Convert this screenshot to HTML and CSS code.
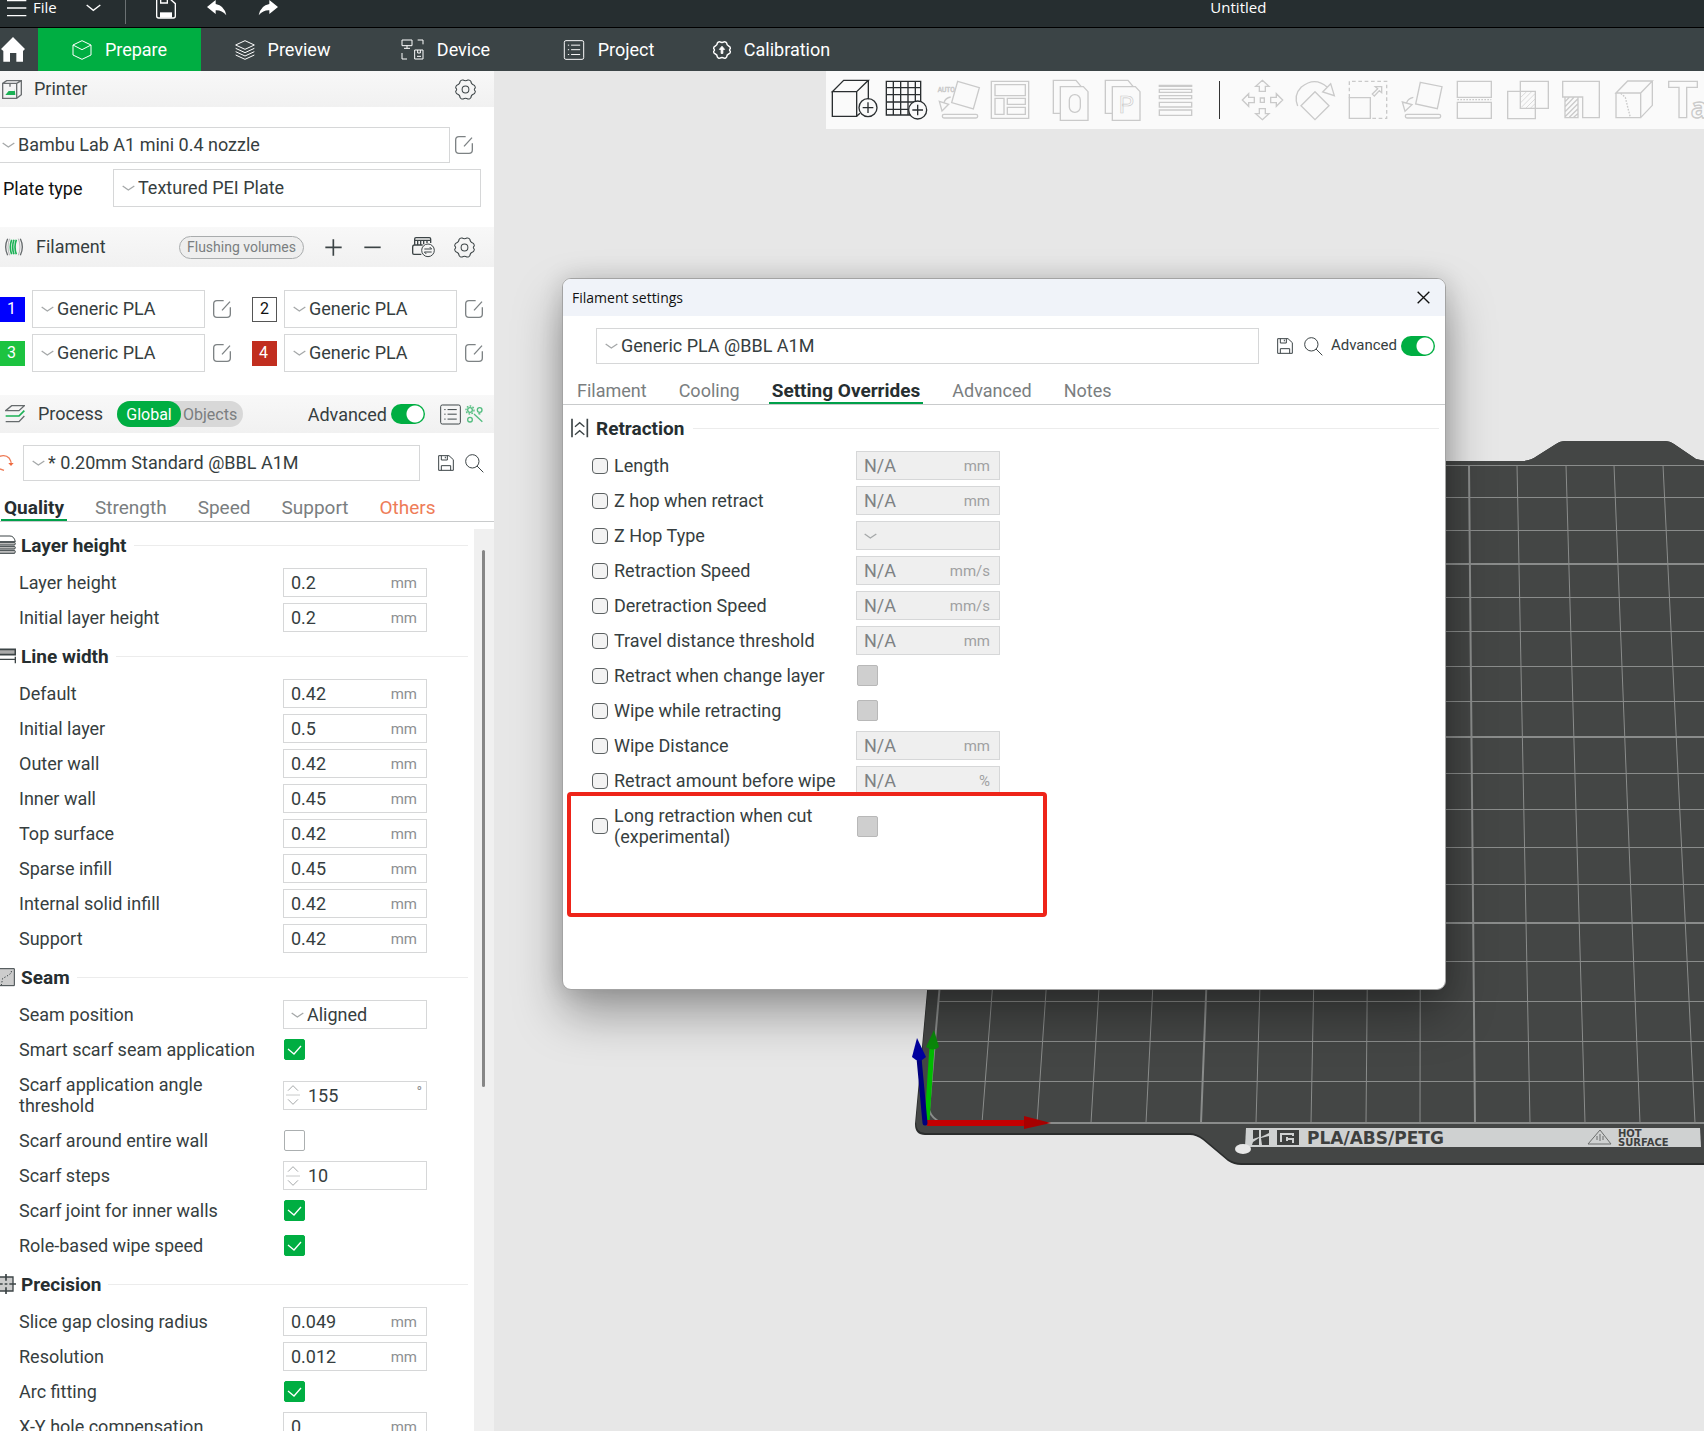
FILE: index.html
```html
<!DOCTYPE html>
<html lang="en">
<head>
<meta charset="utf-8">
<title>Untitled</title>
<link rel="stylesheet" href="styles.css">
</head>
<body>
<svg class="defs" aria-hidden="true">
  <symbol id="chev" viewBox="0 0 39 18"><path d="M2 3 19 15 37 3"/></symbol>
  <symbol id="gear" viewBox="-1 -1 62 62"><path d="M17 3Q20 1 23 2 30 6 37 2 40 1 43 3L46 6Q46 14 54 17 57 17 58 21L59 25Q53 30 59 35L58 39Q57 43 54 43 46 46 46 54L43 57Q40 59 37 58 30 54 23 58 20 59 17 57L14 54Q14 46 6 43 3 43 2 39L1 35Q7 30 1 25L2 21Q3 17 6 17 14 14 14 6Z"/><circle cx="30" cy="30" r="10"/></symbol>
  <symbol id="edit" viewBox="0 0 54 54"><path d="M32 2H12Q2 2 2 12V42Q2 52 12 52H42Q52 52 52 42V22M27 31 51 5"/></symbol>
  <symbol id="save" viewBox="0 0 48 48"><path d="M2 2H33L46 14V46H2ZM10 2V15H28V2M22 5V10M10 46V32H38V46"/></symbol>
  <symbol id="search" viewBox="0 0 57 57"><circle cx="22" cy="22" r="20"/><path d="M36 36 55 55"/></symbol>
  <symbol id="list" viewBox="0 0 64 62"><rect x="2" y="2" width="60" height="58" rx="5"/><path d="M13 16H17M13 30H17M13 45H17M23 16H51M23 30H51M23 45H51"/></symbol>
  <symbol id="spin" viewBox="0 0 42 66"><path d="M6 20 21 5 36 20M6 46 21 61 36 46"/><path d="M0 33H42" opacity=".6"/></symbol>
</svg>

<div class="app">
  <header class="titlebar">
    <button class="file" type="button"><svg class="ico" width="20" height="18" viewBox="0 0 60 54"><path d="M0 5H58M0 27H58M0 50H58" stroke="#fff" stroke-width="4"/></svg>File</button>
    <svg class="ico drop" width="15" height="8" viewBox="0 0 45 24"><path d="M2 3 22 19 43 3" stroke="#fff" stroke-width="4"/></svg>
    <i class="bar"></i>
    <button type="button" aria-label="Save"><svg class="ico" width="20" height="22" viewBox="0 0 60 66"><path d="M2 0V57Q2 63 8 63H52Q58 63 58 57V20L40 4H2" stroke="#fff" stroke-width="4"/><path d="M14 2V18H34V2" stroke="#fff" stroke-width="4"/><path d="M12 46H48V62H12Z" fill="#fff"/></svg></button>
    <button type="button" aria-label="Undo"><svg class="ico" width="20" height="18" viewBox="0 0 60 54"><path d="M0 24 26 3V15Q52 19 58 49 44 33 26 34V45Z" fill="#fff"/></svg></button>
    <button type="button" aria-label="Redo"><svg class="ico" width="20" height="18" viewBox="0 0 60 54"><path d="M60 24 34 3V15Q8 19 2 49 16 33 34 34V45Z" fill="#fff"/></svg></button>
    <span class="doc">Untitled</span>
  </header>

  <nav class="nav">
    <button class="home" type="button" aria-label="Home"><svg class="ico" width="24" height="25" viewBox="0 0 72 75"><path d="M36 0 72 36 66 42V74H46V48H27V74H7V42L0 36Z" fill="#fff"/></svg></button>
    <button class="navtab on" type="button"><svg class="ico w" width="20" height="20" viewBox="0 0 60 60"><path d="M30 2 57 15V45L30 58 3 45V15ZM3 15 30 29 57 15"/></svg>Prepare</button>
    <button class="navtab" type="button"><svg class="ico w" width="20" height="20" viewBox="0 0 60 60"><path d="M30 2 58 15 30 28 2 15ZM2 25 30 38 58 25M2 35 30 48 58 35M2 45 30 58 58 45"/></svg>Preview</button>
    <button class="navtab" type="button"><svg class="ico w" width="23" height="21" viewBox="0 0 69 63"><path d="M3 3H33V20H3ZM18 20V28M9 28H27M50 3H66V16M3 42V60H18M41 33H66V60H41ZM50 33V42H58V33M48 52H60"/></svg>Device</button>
    <button class="navtab" type="button"><svg class="ico w" width="22" height="20"><use href="#list"/></svg>Project</button>
    <button class="navtab" type="button"><svg class="ico w" width="18" height="18" viewBox="-1 -1 62 62"><path d="M17 3Q20 1 23 2 30 6 37 2 40 1 43 3L46 6Q46 14 54 17 57 17 58 21L59 25Q53 30 59 35L58 39Q57 43 54 43 46 46 46 54L43 57Q40 59 37 58 30 54 23 58 20 59 17 57L14 54Q14 46 6 43 3 43 2 39L1 35Q7 30 1 25L2 21Q3 17 6 17 14 14 14 6Z" stroke-width="5"/><path d="M30 17 39 28H33V42H27V28H21Z" fill="#fff"/></svg>Calibration</button>
  </nav>

  <div class="main">
    <aside class="side">
      <section class="head printer-head">
        <svg class="ico" width="20" height="19" viewBox="0 0 60 57"><path d="M2 10 14 2H58V44L44 55H2ZM2 10H44V55M44 10 58 2M24 10V20" stroke="#6a6e70" stroke-width="4"/><path d="M10 45 20 33H38V26L40 45Z" fill="#1bb155"/></svg>
        <h2>Printer</h2>
        <button class="push" type="button" aria-label="Printer options"><svg class="ico d" width="21" height="21"><use href="#gear"/></svg></button>
      </section>
      <div class="printer">
        <div class="line preset"><span class="pick wide"><svg class="chev"><use href="#chev"/></svg><select aria-label="Printer preset"><option>Bambu Lab A1 mini 0.4 nozzle</option></select></span><button type="button" aria-label="Edit printer"><svg class="ico g" width="18" height="18"><use href="#edit"/></svg></button></div>
        <div class="line plate"><label for="plate">Plate type</label><span class="pick tall"><svg class="chev"><use href="#chev"/></svg><select id="plate"><option>Textured PEI Plate</option></select></span></div>
      </div>

      <section class="head filament-head">
        <svg class="ico" width="18" height="18" viewBox="0 0 54 54"><path d="M8 2Q-4 27 8 52M46 2Q58 27 46 52" stroke="#666b6d" stroke-width="4"/><path d="M14 2Q4 27 14 52M40 2Q50 27 40 52" stroke="#999" stroke-width="2"/><path d="M20 5Q12 27 20 49M27 5Q19 27 27 49M34 5Q26 27 34 49" stroke="#1bb155" stroke-width="5"/></svg>
        <h2>Filament</h2>
        <button class="flush" type="button">Flushing volumes</button>
        <button type="button" class="plus" aria-label="Add filament"><svg class="ico d" width="17" height="17" viewBox="0 0 51 51"><path d="M25 1V50M1 25H50" stroke-width="5"/></svg></button>
        <button type="button" class="minus" aria-label="Remove filament"><svg class="ico d" width="17" height="17" viewBox="0 0 51 51"><path d="M1 25H50" stroke-width="5"/></svg></button>
        <button type="button" class="ams" aria-label="Sync filaments"><svg class="ico d" width="23" height="21" viewBox="0 0 69 63"><path d="M8 22V6Q8 2 12 2H52Q56 2 56 6V18M8 10H56M17 10V24M26 10V24M35 10V22M45 10V18M28 52H6Q2 52 2 48V30Q2 24 8 24H32" stroke-width="4"/><circle cx="48" cy="40" r="19" fill="#f4f4f4"/><path d="M37 36H59L53 30M59 45H37L43 51"/></svg></button>
        <button type="button" class="fgear" aria-label="Filament options"><svg class="ico d" width="21" height="21"><use href="#gear"/></svg></button>
      </section>
      <div class="slots">
        <div class="slot"><span class="sw blue">1</span><span class="pick tall"><svg class="chev"><use href="#chev"/></svg><select aria-label="Filament 1"><option>Generic PLA</option></select></span><button type="button" aria-label="Edit filament 1"><svg class="ico g" width="18" height="18"><use href="#edit"/></svg></button></div>
        <div class="slot"><span class="sw white">2</span><span class="pick tall"><svg class="chev"><use href="#chev"/></svg><select aria-label="Filament 2"><option>Generic PLA</option></select></span><button type="button" aria-label="Edit filament 2"><svg class="ico g" width="18" height="18"><use href="#edit"/></svg></button></div>
        <div class="slot"><span class="sw green">3</span><span class="pick tall"><svg class="chev"><use href="#chev"/></svg><select aria-label="Filament 3"><option>Generic PLA</option></select></span><button type="button" aria-label="Edit filament 3"><svg class="ico g" width="18" height="18"><use href="#edit"/></svg></button></div>
        <div class="slot"><span class="sw red">4</span><span class="pick tall"><svg class="chev"><use href="#chev"/></svg><select aria-label="Filament 4"><option>Generic PLA</option></select></span><button type="button" aria-label="Edit filament 4"><svg class="ico g" width="18" height="18"><use href="#edit"/></svg></button></div>
      </div>

      <section class="head process-head">
        <svg class="ico" width="20" height="18" viewBox="0 0 60 54"><path d="M20 2H58L42 17H2Z" stroke="#666b6d" stroke-width="4"/><path d="M2 33H42L58 17" stroke="#1bb155" stroke-width="5"/><path d="M2 50H42L58 33" stroke="#666b6d" stroke-width="4"/></svg>
        <h2>Process</h2>
        <span class="seg"><button class="on" type="button">Global</button><button type="button">Objects</button></span>
        <label class="adv" for="adv1">Advanced</label><input class="toggle" id="adv1" type="checkbox" checked>
        <button class="plist" type="button" aria-label="Compare"><svg class="ico d" width="21" height="21"><use href="#list"/></svg></button>
        <button class="pgear" type="button" aria-label="Parameter table"><svg class="ico" width="18" height="18" viewBox="0 0 54 54" stroke="#52bd7f" stroke-width="4"><circle cx="15" cy="15" r="7"/><circle cx="15" cy="15" r="12" stroke-dasharray="5 4"/><circle cx="44" cy="15" r="7"/><circle cx="15" cy="44" r="7"/><path d="M27 27 52 50M40 26 46 27"/></svg></button>
      </section>
      <div class="line process">
        <button type="button" aria-label="Reset"><svg class="ico" width="14" height="16" viewBox="0 0 42 48"><path d="M0 4Q16-2 28 10 34 18 34 30M0 42 12 46" stroke="#ee7c58" stroke-width="4"/><path d="M25 24H41L33 33Z" fill="#ee6a40"/></svg></button>
        <span class="pick"><svg class="chev"><use href="#chev"/></svg><select aria-label="Process preset"><option>* 0.20mm Standard @BBL A1M</option></select></span>
        <button class="psave" type="button" aria-label="Save preset"><svg class="ico d" width="16" height="16"><use href="#save"/></svg></button>
        <button type="button" aria-label="Search"><svg class="ico d" width="19" height="19"><use href="#search"/></svg></button>
      </div>
      <div class="tabs" role="tablist">
        <button class="on" role="tab" type="button">Quality</button><button role="tab" type="button">Strength</button><button role="tab" type="button">Speed</button><button role="tab" type="button">Support</button><button class="warn" role="tab" type="button">Others</button>
      </div>

      <div class="scroll">
        <div class="params">
          <h3><svg class="ico d" width="16" height="20" viewBox="0 0 48 60"><path d="M0 3H30Q42 3 46 20H0" /><path d="M0 22H44Q48 26 44 30H0M0 34H44Q48 38 44 42H0M0 46H44Q48 50 44 55H0" fill="#bbb"/></svg>Layer height</h3>
          <div class="row"><label for="p1">Layer height</label><span class="val"><input id="p1" value="0.2"><span>mm</span></span></div>
          <div class="row"><label for="p2">Initial layer height</label><span class="val"><input id="p2" value="0.2"><span>mm</span></span></div>
          <h3><svg class="ico d" width="16" height="20" viewBox="0 0 48 60"><path d="M-4 10H46V26H-4Z" fill="#aaa" stroke-width="5"/><path d="M0 40H46M46 32V52" stroke-width="4"/></svg>Line width</h3>
          <div class="row"><label for="p3">Default</label><span class="val"><input id="p3" value="0.42"><span>mm</span></span></div>
          <div class="row"><label for="p4">Initial layer</label><span class="val"><input id="p4" value="0.5"><span>mm</span></span></div>
          <div class="row"><label for="p5">Outer wall</label><span class="val"><input id="p5" value="0.42"><span>mm</span></span></div>
          <div class="row"><label for="p6">Inner wall</label><span class="val"><input id="p6" value="0.45"><span>mm</span></span></div>
          <div class="row"><label for="p7">Top surface</label><span class="val"><input id="p7" value="0.42"><span>mm</span></span></div>
          <div class="row"><label for="p8">Sparse infill</label><span class="val"><input id="p8" value="0.45"><span>mm</span></span></div>
          <div class="row"><label for="p9">Internal solid infill</label><span class="val"><input id="p9" value="0.42"><span>mm</span></span></div>
          <div class="row"><label for="p10">Support</label><span class="val"><input id="p10" value="0.42"><span>mm</span></span></div>
          <h3><svg class="ico d" width="16" height="20" viewBox="0 0 48 60"><path d="M-6 5H43V56H-6Z" fill="#ccc"/><path d="M34 12V18L20 28 8 34 4 54" stroke-dasharray="4 5"/></svg>Seam</h3>
          <div class="row"><label for="p11">Seam position</label><span class="val"><svg class="chev"><use href="#chev"/></svg><select id="p11"><option>Aligned</option></select></span></div>
          <div class="row"><label for="p12">Smart scarf seam application</label><input class="box" id="p12" type="checkbox" checked></div>
          <div class="row two"><label for="p13">Scarf application angle threshold</label><span class="val"><svg class="spin"><use href="#spin"/></svg><input id="p13" value="155"><span class="deg">°</span></span></div>
          <div class="row"><label for="p14">Scarf around entire wall</label><input class="box" id="p14" type="checkbox"></div>
          <div class="row"><label for="p15">Scarf steps</label><span class="val"><svg class="spin"><use href="#spin"/></svg><input id="p15" value="10"></span></div>
          <div class="row"><label for="p16">Scarf joint for inner walls</label><input class="box" id="p16" type="checkbox" checked></div>
          <div class="row"><label for="p17">Role-based wipe speed</label><input class="box" id="p17" type="checkbox" checked></div>
          <h3><svg class="ico d" width="16" height="20" viewBox="0 0 48 60"><path d="M-6 9H39V51H-6Z" fill="#ccc" stroke-width="4"/><path d="M18 0V20M18 40V60M28 30H48M0 30H8M14 30H22" stroke-width="5"/></svg>Precision</h3>
          <div class="row"><label for="p18">Slice gap closing radius</label><span class="val"><input id="p18" value="0.049"><span>mm</span></span></div>
          <div class="row"><label for="p19">Resolution</label><span class="val"><input id="p19" value="0.012"><span>mm</span></span></div>
          <div class="row"><label for="p20">Arc fitting</label><input class="box" id="p20" type="checkbox" checked></div>
          <div class="row"><label for="p21">X-Y hole compensation</label><span class="val"><input id="p21" value="0"><span>mm</span></span></div>
        </div>
        <div class="track"><i></i></div>
      </div>
    </aside>

    <main class="scene">
      <svg class="bed" viewBox="494 71 1210 1360" preserveAspectRatio="xMinYMin slice" aria-hidden="true">
        <path d="M975 461H1524Q1532 460 1537 456L1556 444Q1560 441 1566 441H1664Q1670 441 1674 444L1696 459 1710 462V1165H1241Q1234 1165 1228 1161L1203 1140Q1196 1135 1190 1135H925Q915 1135 915 1124Z" fill="#2b2d2d"/>
        <path d="M975 461H1524Q1532 460 1537 456L1556 444Q1560 441 1566 441H1664Q1670 441 1674 444L1696 459 1710 462V1163H1241Q1234 1163 1228 1159L1203 1138Q1196 1133 1190 1133H925Q916 1133 916 1122Z" fill="#444645"/>
        <g fill="none" stroke="#8a8c8b" stroke-width="1">
          <path d="M1033 465 982 1123M1082 465 1037 1123M1130 465 1091 1123M1179 465 1146 1123M1275 465 1256 1123M1324 465 1311 1123M1372 465 1366 1123M1421 465 1420 1123M1517 465 1530 1123M1566 465 1585 1123M1614 465 1640 1123M1663 465 1695 1123"/>
          <path d="M985 465.500H1704M983 497.500H1704M980 530.500H1704M974 597.500H1704M971 631.500H1704M968 666.500H1704M965 701.500H1704M958 773.500H1704M955 809.500H1704M952 847.500H1704M949 884.500H1704M942 961.500H1704M938 1001.500H1704M935 1041.500H1704M932 1081.500H1704"/>
          <path d="M985 465 929 1110Q932 1119 942 1123M1227 465 1201 1123M1469 465 1475 1123M977 564H1704M961 737H1704M945 923H1704M942 1123H1704" stroke-width="2"/>
        </g>
        <path d="M1246 1128H1700L1701 1147H1245Z" fill="#cfd1d1"/>
        <ellipse cx="1243" cy="1149" rx="8" ry="5" fill="#e8e8e8"/>
        <path d="M1253 1130H1259V1137L1253 1139ZM1261 1130H1269V1133L1261 1137ZM1253 1142 1259 1138V1145H1252ZM1261 1138 1269 1136V1145H1262Z" fill="#3e403f"/>
        <path d="M1277 1130H1299V1145H1277Z" fill="#3e403f"/>
        <path d="M1281 1142V1134H1293V1136M1287 1139H1293V1143M1287 1137V1141" stroke="#cfd1d1" stroke-width="2" fill="none"/>
        <text class="plate-txt" x="1307" y="1144">PLA/ABS/PETG</text>
        <path d="M1600 1130 1611 1144H1588ZM1597 1140V1136M1600 1141V1134M1603 1140V1136" fill="none" stroke="#6b6d6c"/>
        <text class="hot-txt" x="1618" y="1137">HOT</text>
        <text class="hot-txt" x="1618" y="1146">SURFACE</text>
        <path d="M927 1122 932 1046" stroke="#0b0" stroke-width="5"/>
        <path d="M934 1030 939 1047Q933 1052 926 1047Z" fill="#0a8a0a"/>
        <path d="M927 1123H1026" stroke="#c40000" stroke-width="6"/>
        <path d="M1024 1116 1051 1123 1024 1129Z" fill="#a80000"/>
        <path d="M925 1123 919 1058" stroke="#00007d" stroke-width="5" stroke-linecap="round"/>
        <path d="M917 1038 926 1057Q919 1064 912 1057Z" fill="#0000a0"/>
      </svg>

      <div class="tools">
        <button type="button" aria-label="Add model"><svg class="dark" viewBox="33 48 144 144"><path d="M37 95 71 61H145L110 95ZM37 95H110V169H37ZM145 61V118M110 169 120 160"/><circle cx="144" cy="143" r="27"/><path d="M144 127V159M128 143H160"/></svg></button>
        <button type="button" aria-label="Add plate"><svg class="dark" viewBox="189 48 144 144"><path d="M199 64H302V165H199ZM220 64V165M242 64V165M264 64V165M286 64V165M199 83H302M199 104H302M199 126H302M199 148H302"/><circle cx="293" cy="150" r="27" fill="#fafafa"/><path d="M293 134V166M277 150H309"/></svg></button>
        <button type="button" aria-label="Auto orient"><svg viewBox="345 48 144 144"><path d="M413 64 478 83 460 147 395 128ZM392 111Q376 114 372 128M358 124 386 133 366 153Z"/><rect x="367" y="163" width="106" height="11" rx="5"/><text x="353" y="97" font-size="20">AUTO</text></svg></button>
        <button type="button" aria-label="Arrange"><svg viewBox="501 48 144 144"><path d="M514 64H626V175H514ZM525 74H616V107H525ZM525 115H552V163H525ZM562 115H616V133H562ZM562 142H616V163H562Z"/></svg></button>
        <button class="gap" type="button" aria-label="Split to objects"><svg viewBox="681 48 144 144"><path d="M721 160H700V61H768L783 79M721 80H790L804 95V181H721Z"/><rect x="748" y="104" width="33" height="53" rx="16"/></svg></button>
        <button type="button" aria-label="Split to parts"><svg viewBox="837 48 144 144"><path d="M877 160H856V61H924L939 79M877 80H946L960 95V181H877Z"/><text x="896" y="158" font-size="72">P</text></svg></button>
        <button type="button" aria-label="Variable layer height"><svg viewBox="993 48 144 144"><path d="M1018 76H1115V79H1018ZM1018 88H1115V97H1018ZM1018 107H1115V116H1018ZM1018 127H1115V141H1018ZM1018 150H1115V166H1018Z"/></svg></button>
        <i class="div"></i>
        <button type="button" aria-label="Move"><svg viewBox="-6 48 144 144"><path d="M67 61 87 79H76V94H58V79H47ZM67 179 87 161H76V146H58V161H47ZM7 120 26 101V112H43V128H26V139ZM128 120 109 101V112H92V128H109V139ZM61 114H73V127H61Z"/></svg></button>
        <button type="button" aria-label="Rotate"><svg viewBox="153 48 144 144"><path d="M225 95 267 137 225 179 183 137ZM173 138Q160 105 184 81 225 48 262 82M272 71 283 107 248 96Z"/></svg></button>
        <button type="button" aria-label="Scale"><svg viewBox="312 48 144 144"><path d="M328 113H391V175H328Z"/><path d="M328 113V64H440V175H391" stroke-dasharray="11 8"/><path d="M397 102 413 86 406 80H425V98L418 92 403 108Z"/></svg></button>
        <button type="button" aria-label="Lay on face"><svg viewBox="471 48 144 144"><path d="M541 67 606 80 592 146 527 132ZM520 112Q504 115 500 128M487 126 516 134 495 154Z"/><rect x="496" y="163" width="106" height="11" rx="5"/></svg></button>
        <button type="button" aria-label="Cut"><svg viewBox="630 48 144 144"><path d="M652 64H754V112H652ZM652 127H754V175H652Z"/><path d="M652 119H754" stroke-dasharray="5 4"/></svg></button>
        <button type="button" aria-label="Mesh boolean"><svg viewBox="789 48 144 144"><path d="M841 64H925V145H841ZM803 94H886V176H803Z"/><path d="M842 112 860 95M842 128 875 95M844 142 885 101M858 144 885 117M872 144 885 131" stroke-width="2"/></svg></button>
        <button type="button" aria-label="Supports"><svg viewBox="948 48 144 144"><path d="M968 64H1078V173H1028V111H968ZM975 111H1014V173H975ZM975 125 988 112M975 140 1002 112M975 155 1013 117M975 170 1013 132M988 172 1013 147M1001 172 1013 161"/></svg></button>
        <button type="button" aria-label="Seam painting"><svg viewBox="1107 48 144 144"><path d="M1128 99 1163 63H1237L1202 99ZM1128 99H1202V173H1128ZM1237 63V136L1202 173"/><path d="M1142 100 1156 112 1164 145 1171 172" stroke-dasharray="5 4"/></svg></button>
        <button type="button" aria-label="Text"><svg viewBox="1266 48 144 144"><path d="M1286 64H1372V82H1340V173H1317V82H1286Z"/><text class="glyph" x="1352" y="173" font-size="84" font-weight="700">a</text></svg></button>
      </div>

      <section class="dialog" role="dialog" aria-label="Filament settings">
        <header>Filament settings<button type="button" aria-label="Close"><svg class="ico" width="13" height="13" viewBox="0 0 39 39"><path d="M2 2 37 37M37 2 2 37" stroke="#111" stroke-width="4"/></svg></button></header>
        <div class="line dpreset">
          <span class="pick"><svg class="chev"><use href="#chev"/></svg><select aria-label="Filament preset"><option>Generic PLA @BBL A1M</option></select></span>
          <button class="dsave" type="button" aria-label="Save preset"><svg class="ico d" width="16" height="16"><use href="#save"/></svg></button>
          <button type="button" aria-label="Search"><svg class="ico d" width="19" height="19"><use href="#search"/></svg></button>
          <label for="adv2">Advanced</label><input class="toggle" id="adv2" type="checkbox" checked>
        </div>
        <div class="tabs" role="tablist">
          <button role="tab" type="button">Filament</button><button role="tab" type="button">Cooling</button><button class="on" role="tab" type="button">Setting Overrides</button><button role="tab" type="button">Advanced</button><button role="tab" type="button">Notes</button>
        </div>
        <div class="params">
          <h3><svg class="ico d" width="18" height="20" viewBox="0 0 54 60"><path d="M3 2V58M49 2V58" stroke-width="5"/><path d="M12 26 26 14 40 26M12 50 26 38 40 50" stroke-width="4"/></svg>Retraction</h3>
          <div class="row"><input id="r1" type="checkbox"><label for="r1">Length</label><span class="val"><input aria-label="Length value" value="N/A" disabled><span>mm</span></span></div>
          <div class="row"><input id="r2" type="checkbox"><label for="r2">Z hop when retract</label><span class="val"><input aria-label="Z hop value" value="N/A" disabled><span>mm</span></span></div>
          <div class="row"><input id="r3" type="checkbox"><label for="r3">Z Hop Type</label><span class="val"><svg class="chev"><use href="#chev"/></svg><select aria-label="Z Hop Type value" disabled><option></option></select></span></div>
          <div class="row"><input id="r4" type="checkbox"><label for="r4">Retraction Speed</label><span class="val"><input aria-label="Retraction Speed value" value="N/A" disabled><span>mm/s</span></span></div>
          <div class="row"><input id="r5" type="checkbox"><label for="r5">Deretraction Speed</label><span class="val"><input aria-label="Deretraction Speed value" value="N/A" disabled><span>mm/s</span></span></div>
          <div class="row"><input id="r6" type="checkbox"><label for="r6">Travel distance threshold</label><span class="val"><input aria-label="Travel distance value" value="N/A" disabled><span>mm</span></span></div>
          <div class="row"><input id="r7" type="checkbox"><label for="r7">Retract when change layer</label><input class="box" type="checkbox" aria-label="Retract when change layer value" disabled></div>
          <div class="row"><input id="r8" type="checkbox"><label for="r8">Wipe while retracting</label><input class="box" type="checkbox" aria-label="Wipe while retracting value" disabled></div>
          <div class="row"><input id="r9" type="checkbox"><label for="r9">Wipe Distance</label><span class="val"><input aria-label="Wipe Distance value" value="N/A" disabled><span>mm</span></span></div>
          <div class="row"><input id="r10" type="checkbox"><label for="r10">Retract amount before wipe</label><span class="val"><input aria-label="Retract amount value" value="N/A" disabled><span>%</span></span></div>
          <div class="row two"><input id="r11" type="checkbox"><label for="r11">Long retraction when cut (experimental)</label><input class="box" type="checkbox" aria-label="Long retraction value" disabled></div>
        </div>
        <div class="mark"></div>
      </section>
    </main>
  </div>
</div>
</body>
</html>
```

FILE: styles.css
```css
* { box-sizing: border-box; }
body {
  margin: 0;
  font: 18px/21px Roboto, "Noto Sans", sans-serif;
  color: #363e40;
}
button, input, select { font: inherit; color: inherit; margin: 0; }
button { background: none; border: 0; padding: 0; display: flex; align-items: center; flex: none; }
h2, h3 { margin: 0; font-size: 18px; }
h2 { font-weight: 400; }
.defs { display: none; }
.ico { fill: none; display: block; flex: none; }
.w { stroke: #fff; stroke-width: 3px; }
.d { stroke: #3c4446; stroke-width: 3px; }
.g { stroke: #7d8284; stroke-width: 4px; }

.app { height: 100vh; display: flex; flex-direction: column; overflow: hidden; }

/* window title bar */
.titlebar {
  flex: none; height: 28px; padding: 0 0 12px 7px;
  display: flex; align-items: center;
  background: #262e30; border-bottom: 1px solid #000;
  color: #fff; font: 15px/15px "Open Sans", "Noto Sans", sans-serif;
}
.titlebar button { margin-right: 31px; }
.titlebar .file { gap: 6px; margin-right: 29px; }
.drop { margin-right: 24px; }
.bar { width: 1px; height: 32px; margin-right: 30px; background: #6b7173; }
.doc { flex: 1; padding-left: 464px; text-align: center; }

/* main tabs */
.nav { flex: none; height: 43px; display: flex; background: #3b4446; color: #fff; }
.home { width: 38px; padding-left: 1px; }
.navtab { width: 163px; justify-content: center; gap: 13px; }
.navtab.on { background: #00ae42; }

.main { flex: 1; min-height: 0; display: flex; }
.side { flex: none; width: 494px; display: flex; flex-direction: column; background: #fff; overflow: hidden; }
.head { flex: none; display: flex; align-items: center; background: linear-gradient(#f8f8f8, #f1f1f1); }
.head h2 { padding-bottom: 1px; }
.printer-head { height: 36px; padding: 0 18px 0 2px; }
.printer-head h2 { margin-left: 12px; }
.push { margin-left: auto; }

.line { display: flex; align-items: center; }
.pick, .val { display: flex; align-items: center; border: 1px solid #d6d7d8; background: #fff; }
.pick { flex: 1; height: 36px; padding-left: 8px; }
.pick.tall { height: 38px; }
.pick select, .val select, .val input {
  appearance: none; border: 0; padding: 0; background: none; outline: 0;
  flex: 1; min-width: 0; width: 0; height: 100%; opacity: 1;
}
.pick select { padding-bottom: 1px; }
.chev { flex: none; width: 13px; height: 6px; margin-right: 3px; fill: none; stroke: #a5a8a9; stroke-width: 4px; }
.printer { flex: none; padding: 20px 0; }
.preset { margin-left: -7px; padding-right: 21px; gap: 5px; }
.plate { margin-top: 6px; padding: 0 13px 0 3px; color: #111; }
.plate label { width: 110px; }
.plate select { color: #363e40; }

.filament-head { height: 40px; padding: 0 19px 0 5px; }
.filament-head h2 { width: 143px; padding-left: 13px; }
.flush {
  width: 125px; height: 23px; justify-content: center;
  border: 1px solid #a9acad; border-radius: 12px; background: #eee;
  color: #7a7e80; font-size: 14px;
}
.head .flush { margin-left: 13px; }
.plus { margin-left: 21px; }
.minus { margin-left: 22px; }
.ams { margin-left: auto; }
.fgear { margin-left: 19px; }

.slots { flex: none; padding: 23px 0; display: grid; grid-template-columns: 231px 231px; gap: 6px 21px; }
.slot { display: flex; align-items: center; }
.slot .pick { margin: 0 8px 0 7px; }
.sw { width: 25px; height: 25px; line-height: 23px; text-align: center; font-size: 16px; color: #fff; padding-right: 2px; }
.blue { background: #00f; }
.white { background: #fff; border: 1px solid #555; color: #111; padding: 0; line-height: 21px; }
.green { background: #1cc340; }
.red { background: #c12e1f; }

.process-head { height: 38px; padding: 0 11px 0 5px; }
.process-head h2 { width: 79px; margin-left: 13px; }
.seg { display: flex; height: 26px; border-radius: 13px; background: #d8d8d8; color: #7b7e80; font-size: 16px; }
.seg button { padding: 0 6px 0 2px; }
.seg .on { width: 64px; padding: 0; justify-content: center; border-radius: 13px; background: #00ae42; color: #fff; }
.adv { margin-left: auto; }
.toggle {
  appearance: none; flex: none; width: 34px; height: 20px; border-radius: 10px;
  background: radial-gradient(circle at 24px 10px, #fff 8px, #00ae42 9px);
}
.head .toggle { margin: 0 15px 0 4px; }
.pgear { margin-left: 4px; }
.process { flex: none; margin-top: 12px; padding-right: 10px; }
.process .pick { margin-left: 9px; }
.psave { margin: 0 11px 0 18px; }

.tabs {
  flex: none; height: 41px; padding: 16px 0 0 1px; display: flex; align-items: stretch; gap: 25px;
  border-bottom: 1px solid #c9cbcc; color: #7a7e80; font-size: 19px;
}
.tabs button { align-items: flex-start; padding: 0 3px; }
.tabs .on { color: #262e30; font-size: 19px; font-weight: 700; box-shadow: inset 0 -2px #00a04a; }
.tabs .warn { color: #ee7c58; }

.scroll { flex: 1; min-height: 0; display: flex; overflow: hidden; padding-top: 5px; }
.params { flex: 1; }
h3 { height: 36px; margin-bottom: 5px; padding-right: 6px; display: flex; align-items: center; gap: 5px; font-size: 19px; font-weight: 700; color: #262e30; }
h3::after { content: ""; flex: 1; height: 1px; margin-left: 2px; background: #ececec; }
.row { height: 29px; margin-bottom: 6px; padding-left: 19px; display: flex; align-items: center; }
.row.two { height: 50px; }
.row label { width: 264px; padding-right: 20px; }
.val { width: 144px; height: 29px; padding: 0 9px 0 7px; }
.val > span { padding-top: 2px; font-size: 15px; color: #8d9092; }
.val .deg { align-self: flex-start; margin-right: -5px; padding: 0; }
.spin { flex: none; width: 14px; height: 22px; margin: 0 8px 0 -5px; fill: none; stroke: #a5a8a9; stroke-width: 3px; }
.box { appearance: none; width: 21px; height: 21px; margin-left: 1px; border: 1px solid #abafb0; border-radius: 2px; }
.box:checked {
  border-color: #00ae42;
  background: #00ae42 url("data:image/svg+xml,%3Csvg xmlns='http://www.w3.org/2000/svg' viewBox='0 0 19 19'%3E%3Cpath d='M3 9l6 5 7-8' fill='none' stroke='%23fff' stroke-width='1.3'/%3E%3C/svg%3E");
}
.box:disabled { background: #cfcfcf; border-color: #b8b8b8; }
.track { flex: none; width: 20px; margin-top: 2px; padding: 21px 0 0 8px; background: #f0f0f0; }
.track i { display: block; width: 3px; height: 537px; border-radius: 2px; background: #868686; }

/* 3D view */
.scene { flex: 1; min-width: 0; position: relative; overflow: hidden; background: #e7e7e7; }
.bed { position: absolute; inset: 0; width: 100%; height: 100%; }
.plate-txt { font: bold 17px "DejaVu Sans", sans-serif; fill: #3e403f; }
.hot-txt { font: bold 10px "DejaVu Sans", sans-serif; fill: #3e403f; }
.tools {
  position: relative; margin-left: 332px; height: 58px; padding-left: 5px;
  display: flex; align-items: center; gap: 4px; background: #fafafa; overflow: hidden;
}
.tools svg { width: 48px; height: 48px; fill: none; stroke: #cacaca; stroke-width: 4px; overflow: visible; display: block; }
.tools svg.dark { stroke: #2a2e30; }
.tools text { font-family: Roboto, sans-serif; stroke-width: 2px; }
.tools .glyph { font-family: "Noto Sans", sans-serif; stroke-width: 4px; }
.tools .gap { margin-left: 8px; }
.div { flex: none; width: 1px; height: 38px; margin: 0 14px 0 16px; background: #333; }
.div ~ button { margin-right: 1px; }

.dialog {
  position: absolute; left: 68px; top: 207px; width: 884px; min-height: 712px;
  background: #fff; border: 1px solid #a3a3a3; border-radius: 9px;
  box-shadow: 0 24px 48px rgba(0, 0, 0, .34), 0 0 24px rgba(0, 0, 0, .14);
}
.dialog header {
  height: 37px; padding: 0 15px 0 9px; display: flex; align-items: center; justify-content: space-between;
  border-radius: 8px 8px 0 0; background: #f0f3f9; color: #111;
  font: 14px/20px "Open Sans", "Noto Sans", sans-serif;
}
.dpreset { margin-top: 12px; padding: 0 10px 0 33px; font-size: 15px; }
.dpreset .pick { font-size: 18px; }
.dsave { margin: 0 11px 0 18px; }
.dpreset label { margin: 0 4px 0 8px; padding-bottom: 2px; }
.dialog .tabs { padding-left: 11px; gap: 26px; font-size: 18px; }
.dialog .params { padding-top: 5px; }
.dialog h3 { padding: 0 6px 0 8px; gap: 7px; }
.dialog .row { padding-left: 29px; }
.dialog .row > input:first-child {
  appearance: none; flex: none; width: 16px; height: 16px;
  border: 1px solid #5c6162; border-radius: 4px; background: #f3f3f3;
}
.dialog .row label { width: 248px; padding: 0 0 0 6px; }
.dialog .val { background: #efefef; color: #7e8284; }
.dialog .val > span { color: #9fa1a2; }
.mark { position: absolute; left: 4px; top: 513px; width: 480px; height: 125px; border: 4px solid #ee2419; border-radius: 4px; }
```
